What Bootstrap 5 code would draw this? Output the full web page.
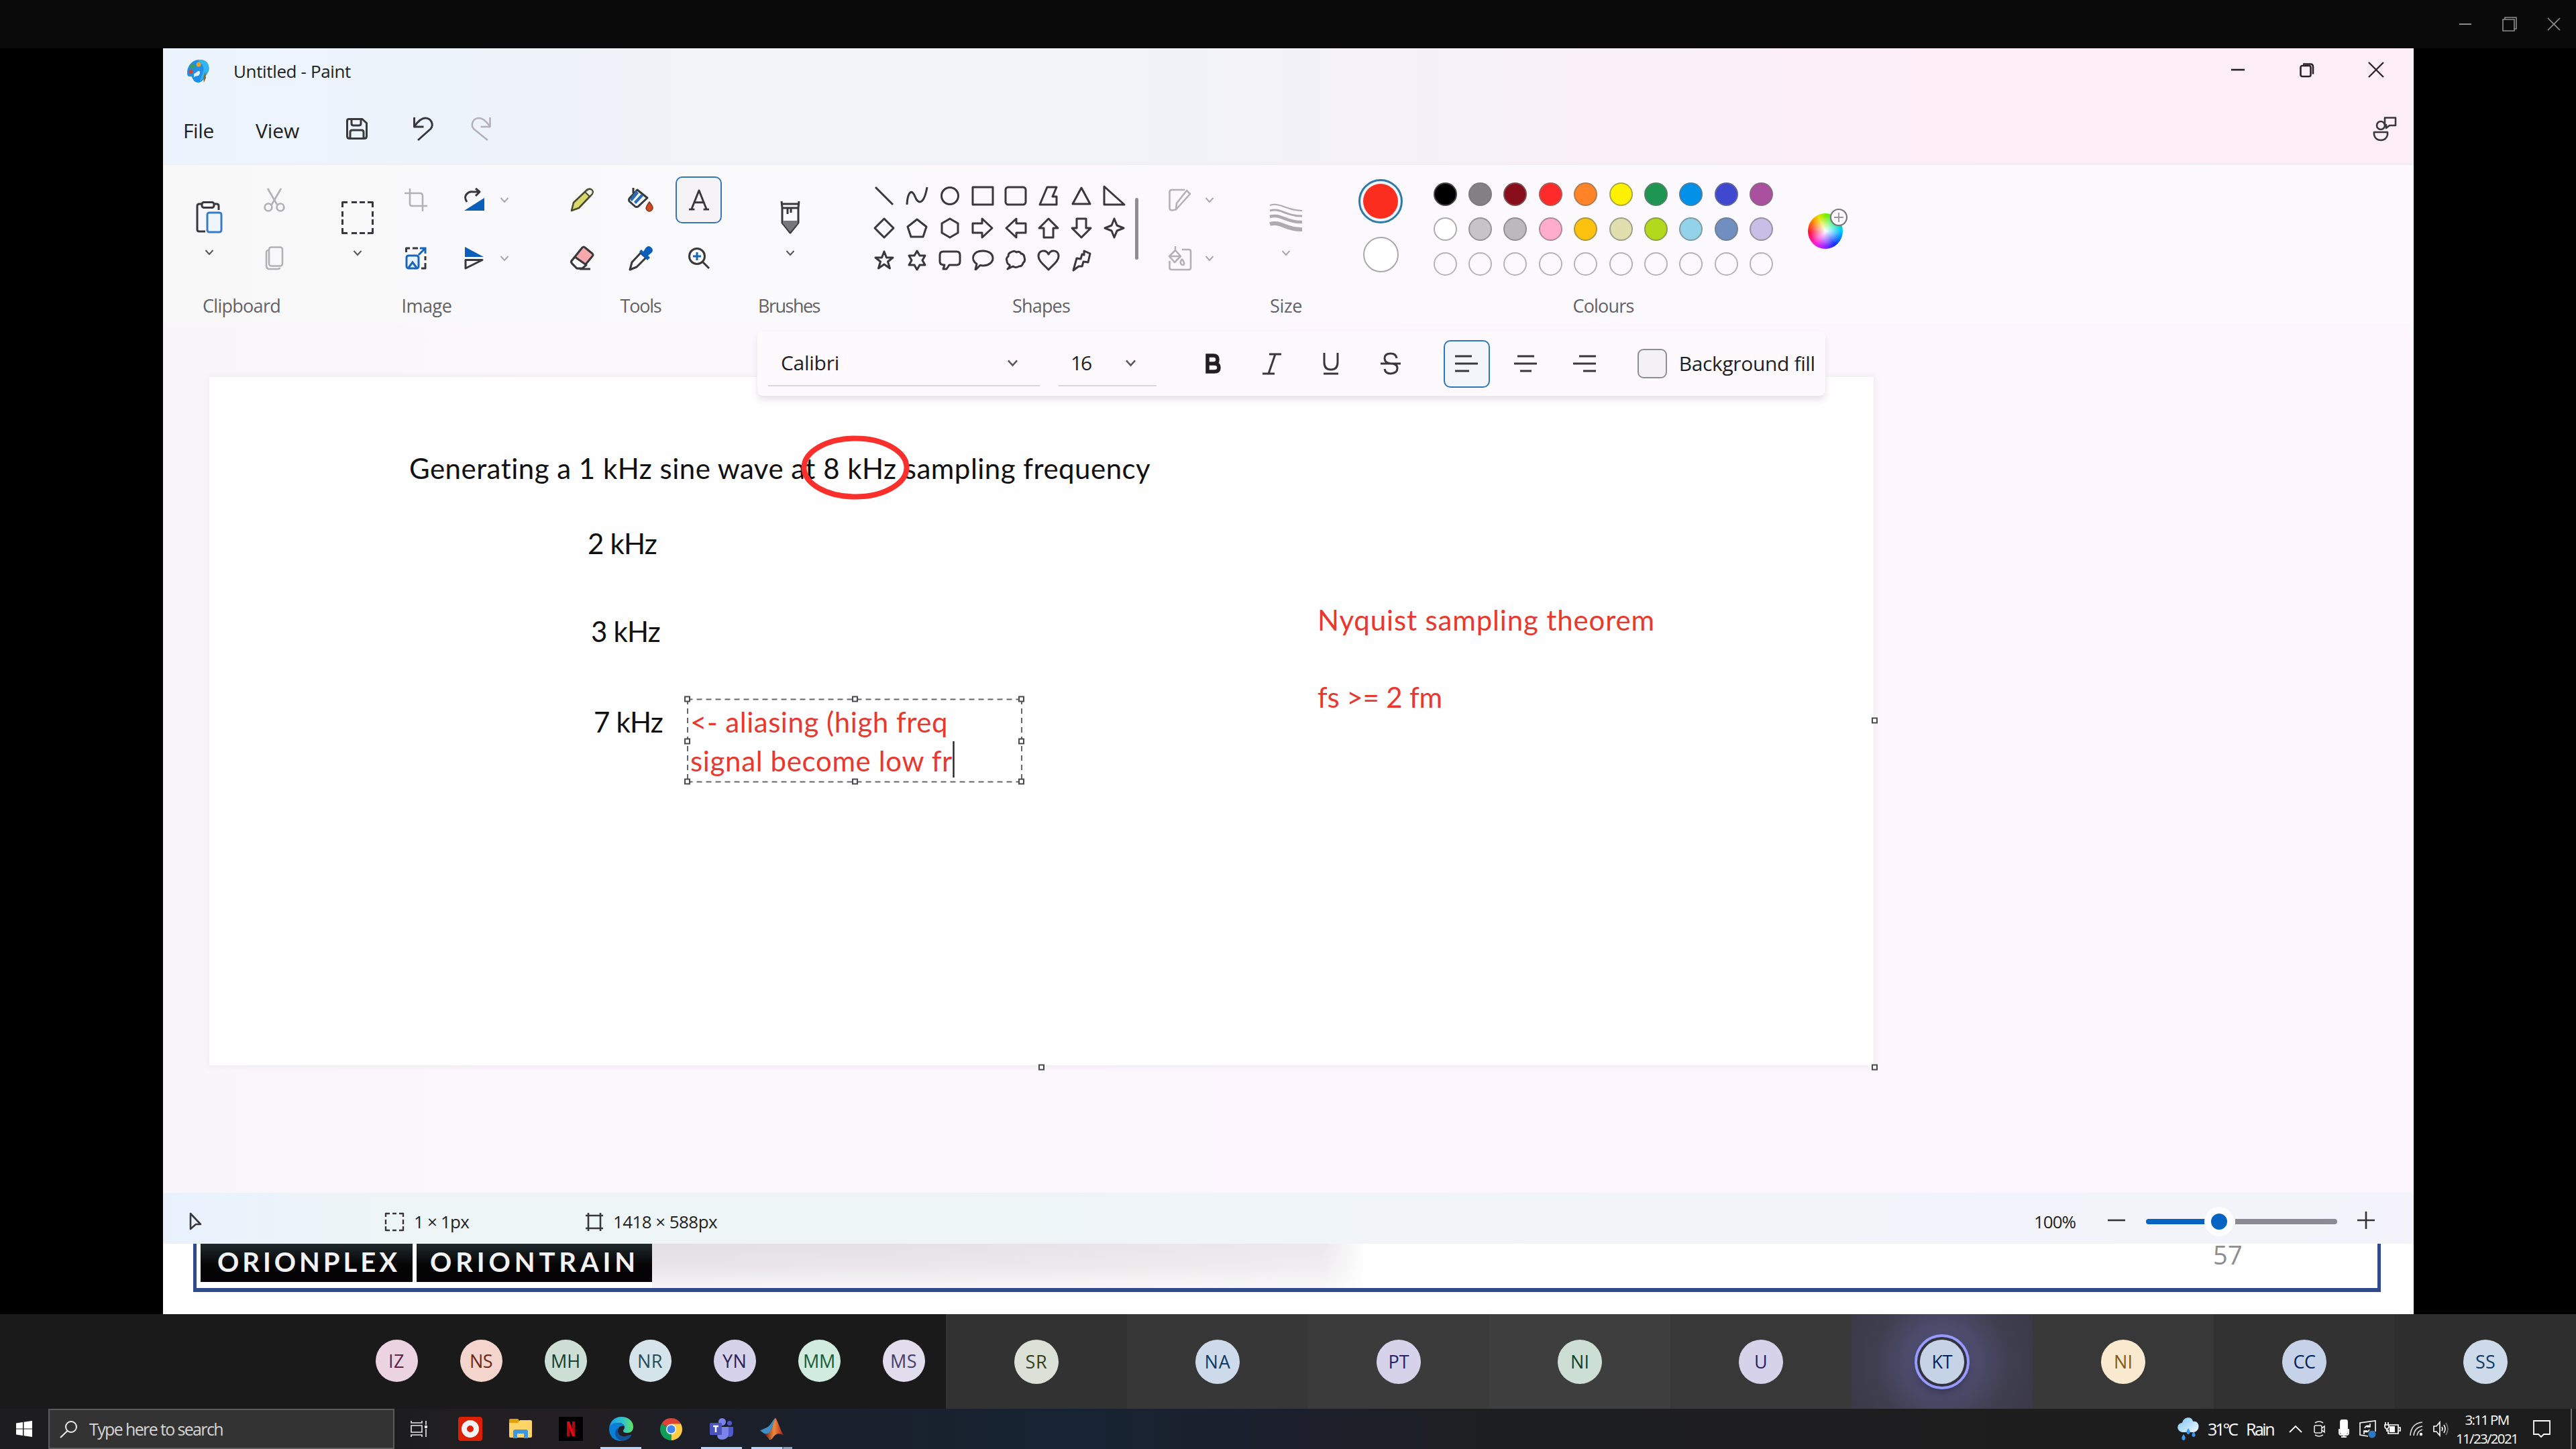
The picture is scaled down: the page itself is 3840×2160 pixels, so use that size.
<!DOCTYPE html>
<html lang="en">
<head>
<meta charset="utf-8">
<title>Untitled - Paint</title>
<link rel="stylesheet" href="https://cdn.jsdelivr.net/npm/bootstrap@5.3.0/dist/css/bootstrap.min.css">
<script src="https://cdn.jsdelivr.net/npm/bootstrap@5.3.0/dist/js/bootstrap.bundle.min.js"></script>
<style>
  html, body { width: 3840px; height: 2160px; overflow: hidden; background: #000; }
  body { font-family: "Open Sans", "Noto Sans", sans-serif; color: #1f1f23; line-height: 1; }
  svg { display: block; overflow: visible; flex: none; }
  .fit { display: inline-block; white-space: nowrap; flex: none; }
  .ln { fill: none; stroke: #38383c; stroke-width: 3; stroke-linejoin: round; }
  .dim { fill: none; stroke: #b3b1b6; stroke-width: 2.6; stroke-linejoin: round; }
  .cv { fill: none; stroke: #55555a; stroke-width: 2; }
  .cvd { fill: none; stroke: #a9a7ad; stroke-width: 2; }

  .viewer-bar { height: 72px; background: #0a0a0a; }
  .viewer-bar > span { width: 66px; }
  .stage { height: 1887px; padding: 0 242px 0 243px; background: #000; }
  .paint-app { height: 1887px; background: #fdf6fe; overflow: hidden; }
  .head { height: 172px; background: linear-gradient(90deg, #ebf4fe 0, #f0f3f8 24%, #f0f3f8 42%, #f7f0f8 60%, #fdeef8 78%, #fdeef8 100%); }
  .title-row { height: 68px; padding-right: 5px; }
  .win-cell { width: 103px; }
  .menu-row { height: 104px; font-size: 30px; }
  .menu-row .fit { margin-top: 5px; }
  .ribbon { height: 238px; background: linear-gradient(90deg, #f8f8f9 0, #faf9fb 25%, #fcf9fe 45%, #fdf9fe 100%); border-top: 2px solid #f0eff4; box-shadow: 0 1px 5px #efeaf2; position: relative; }
  .rgroup { flex: none; }
  .rgroup .tools-area { height: 184px; padding-top: 8px; }
  .rgroup .rlabel { height: 50px; font-size: 27px; color: #626266; }
  .cells { display: grid; grid-auto-flow: column; grid-template-rows: 87px 87px; place-items: center; }
  .tall { grid-row: 1 / span 2; height: 174px; padding-top: 46px; gap: 23px; }
  .a-btn { width: 69px; height: 70px; border: 2.5px solid #3576b6; border-radius: 10px; background: #f6f3f7; }
  .shape-grid { display: grid; grid-template-columns: repeat(8, 49px); grid-template-rows: repeat(3, 48px); place-items: center; margin: 14px 0 0 56px; height: 144px; }
  .shape-scroll { width: 5px; height: 92px; border-radius: 3px; background: #8d8d92; margin: 41px 0 0 7px; }
  .palette { display: grid; grid-template-columns: repeat(10, 52.4px); grid-template-rows: repeat(3, 52px); place-items: center; margin: 9px 0 0 37px; height: 156px; }
  .sw { width: 35px; height: 35px; border-radius: 50%; border: 2px solid #77777799; }
  .sw.open { border-color: #b5b3b7; }
  .col-main { width: 66px; height: 66px; border-radius: 50%; border: 3px solid #2f78aa; padding: 4px; background: #eef6fb; margin-top: 13px; }
  .col-main i { display: block; width: 52px; height: 52px; border-radius: 50%; background: #fb2d1e; }
  .col-second { width: 53px; height: 53px; border-radius: 50%; border: 2px solid #a9a8ac; background: #fff; margin: 20px auto 0; }
  .wheel { position: relative; width: 52px; height: 53px; border-radius: 50%; margin: 64px 0 0 43px;
    background: radial-gradient(circle, #fff 0, #ffffff00 62%), conic-gradient(#7cf000, #00f080 50deg, #00c8ff 90deg, #1030ff 145deg, #b020ff 190deg, #ff20d0 220deg, #ff1040 265deg, #ff8000 305deg, #e8e000 335deg, #7cf000); }
  .wheel svg { position: absolute; left: 33px; top: -7px; }

  .work { height: 1296px; background: linear-gradient(90deg, #f9f6f9 0, #fcf6fd 14%, #fdf6fe 50%, #fdf6fe 100%); position: relative; padding: 80px 0 0 69px; }
  .sheet { position: relative; width: 2481px; height: 1026px; background: #fefefe; box-shadow: 0 0 8px 2px #f0ebf1; font-family: Lato, "Liberation Sans", sans-serif; font-size: 42px; color: #111; }
  .note { position: absolute; line-height: 48px; }
  .hot { color: #e8382f; }
  .over-sheet { position: absolute; left: 0; top: 0; }
  .hd { fill: #fff; stroke: #4a4a4e; stroke-width: 2; }
  .text-tools { position: absolute; left: 886px; top: 12px; width: 1592px; height: 96px; background: #fdf9fd; border-radius: 8px; box-shadow: 0 6px 10px #e8e1ea; font-size: 30px; }
  .pick { height: 68px; border-bottom: 2px solid #dcd6dc; }
  .fmt { width: 88.2px; }
  .al-on { width: 69px; height: 71px; border: 2.5px solid #2d78bd; border-radius: 10px; background: #f2f6fb; }
  .chk { width: 44px; height: 44px; border: 2.5px solid #8e8e92; border-radius: 9px; background: #f4f1f5; }

  .status { height: 76px; background: linear-gradient(90deg, #e9f1fd 0, #eef5f7 10%, #edf5f7 35%, #f1f4f9 60%, #f4f3fb 100%); font-size: 26px; padding-top: 10px; }
  .zoomtrack { width: 285px; height: 8px; border-radius: 4px; position: relative; background: linear-gradient(90deg, #0563c1 0 88px, #f8f8fb 88px 133px, #8b8992 133px); }
  .zoomtrack i { position: absolute; left: 87px; top: -18px; width: 44px; height: 44px; border-radius: 50%; background: #0563c1; border: 10.5px solid #fdfcff; }
  .slide { height: 105px; background: #fff; padding: 0 49px 33px 45px; }
  .slide-in { height: 72px; border: solid #314a8d; border-width: 0 5px 6px 5px; background: linear-gradient(180deg, #ffffff00 0, #ffffff30 50%, #ffffffb0 100%), linear-gradient(90deg, #dedbe0 0, #e6e1e5 1100px, #ece9ec 1680px, #fff 1745px); }
  .brandbox { height: 57px; color: #f2f2f4; font: 700 40px Lato, sans-serif; line-height: 1; padding-bottom: 4px; background: linear-gradient(#1f2a2d, #060506 55%, #040204); }
  .brands { background: #fff; height: 66px; padding-left: 6px; gap: 6px; }

  .crew { height: 141px; background: #1a1a1a; font-size: 27px; }
  .crew-small { width: 1410px; padding: 38px 0 0 559.5px; gap: 63px; }
  .av { width: 63px; height: 63px; border-radius: 50%; flex: none; }
  .tile { width: 270px; height: 141px; }
  .tile .av { width: 66px; height: 66px; }
  .talk { background: radial-gradient(circle at 50% 50%, #5a5985 0, #4e4d6f 30%, #403f50 65%, #3b3946 100%); }
  .talk .av { outline: 4px solid #979bff; outline-offset: 4px; box-shadow: 0 0 0 4px #33323f, 0 8px 20px #24243a; }

  .wtask { height: 60px; background: linear-gradient(90deg, #1d1d1f 0, #1d1d20 600px, #241f22 830px, #1b1f29 1080px, #172433 1600px, #1c1f2b 1950px, #1d1e20 2250px, #1d1d1d 100%); color: #fff; font-size: 25px; }
  .start { width: 72px; }
  .find { width: 516px; height: 60px; background: #333; border: 2px solid #5b5b5b; color: #d5d5d5; padding-left: 16px; }
  .app { width: 75px; height: 60px; position: relative; }
  .app.open-app::after { content: ""; position: absolute; left: 7px; bottom: 0; width: 61px; height: 3px; background: #b3d5fb; }
  .app.more::after { background: linear-gradient(90deg, #b3d5fb 0 46px, #607486 46px 48px, #89a3bf 48px); }
  .tray { width: 36px; }
</style>
</head>
<body>
<svg width="0" height="0" class="position-absolute">
  <defs>
    <symbol id="chev" viewBox="0 0 14 10"><path d="M1.5 2l5.5 6 5.5-6"/></symbol>
    <linearGradient id="edgeA" x1="0" x2="1"><stop offset="0" stop-color="#1d9be8"/><stop offset=".6" stop-color="#35c5c8"/><stop offset="1" stop-color="#62e35c"/></linearGradient>
    <linearGradient id="mat" x1="0" x2="1"><stop offset="0" stop-color="#6b2018"/><stop offset=".5" stop-color="#f08a3c"/><stop offset="1" stop-color="#a82018"/></linearGradient>
    <linearGradient id="cloud" x1="0" x2="1" y2="1"><stop offset="0" stop-color="#79c4f5"/><stop offset="1" stop-color="#f2f8fd"/></linearGradient>
  </defs>
</svg>

<header class="viewer-bar d-flex justify-content-end align-items-center">
  <span class="d-flex justify-content-center"><svg width="18" height="2"><path d="M0 1h18" stroke="#8d8d8d" stroke-width="2"/></svg></span>
  <span class="d-flex justify-content-center"><svg width="22" height="22" fill="none" stroke="#8d8d8d" stroke-width="1.6"><path d="M1 4h17v17H1zM4 4V1h17v17h-3"/></svg></span>
  <span class="d-flex justify-content-center"><svg width="18" height="18" stroke="#8d8d8d" stroke-width="1.6"><path d="M0 0l18 18M18 0L0 18"/></svg></span>
</header>

<main class="stage">
  <div class="paint-app d-flex flex-column">
    <div class="head flex-shrink-0">
      <div class="title-row d-flex align-items-center">
        <svg style="margin-left:35px" width="36" height="36" viewBox="0 0 36 36"><path d="M19 1C8 1 1 11 1 21c0 6 4 5 6 5s2 8 9 9c6 1 9-4 11-8 5-6 8-11 6-17C31 4 26 1 19 1z" fill="#1e90e6"/><path d="M21 1c8 0 13 6 12 12-1 8-8 17-13 20 2-8 7-14 5-21-2-5-5-8-9-10z" fill="#35b4f2"/><circle cx="9" cy="11" r="3.5" fill="#3f9c5a"/><circle cx="18" cy="8" r="3.5" fill="#e5a52c"/><circle cx="6.500" cy="19" r="3" fill="#d2492f"/><path d="M28 18l-3 10 1 7 3-7z" fill="#856a2f"/><path d="M11 22c5-2 6-5 8-4s1 6-2 7-5 0-6 3z" fill="#e2eef8"/></svg>
        <span class="fit" data-w="175" style="margin-left:34px;font-size:26px">Untitled - Paint</span>
        <div class="ms-auto d-flex align-items-center pb-1">
          <span class="win-cell d-flex justify-content-center"><svg width="20" height="4"><path d="M0 2h20" stroke="#222" stroke-width="2.6"/></svg></span>
          <span class="win-cell d-flex justify-content-center"><svg width="22" height="22" fill="none" stroke="#2b2228" stroke-width="2.6"><rect x="1.500" y="5" width="15" height="16" rx="2.500"/><path d="M5 2.500h11q4 0 4 4v11"/></svg></span>
          <span class="win-cell d-flex justify-content-center"><svg width="22" height="22" stroke="#2b2228" stroke-width="2.3"><path d="M0 0l22 22M22 0L0 22"/></svg></span>
        </div>
      </div>
      <div class="menu-row d-flex align-items-center">
        <span class="fit" data-w="46" style="margin-left:30px">File</span>
        <span class="fit" data-w="65" style="margin-left:62px">View</span>
        <svg class="ln" style="margin-left:70px" width="32" height="32" viewBox="0 0 32 32"><path d="M4 1.500h20l6.500 6V27q0 3.500-3.500 3.500H5Q1.500 30.500 1.500 27V4Q1.500 1.500 4 1.500zM8 2v6q0 3 3 3h8q3 0 3-3V2M6 30V21q0-3 3-3h14q3 0 3 3v9"/></svg>
        <svg class="ln" style="margin-left:68px" width="30" height="36" viewBox="0 0 30 36"><path d="M1.500 1v14h14M2 14C7 7 12 2 18 2c9 0 13 10 8 16L7 35"/></svg>
        <svg class="dim" style="margin-left:56px" width="30" height="36" viewBox="0 0 30 36"><path d="M28.500 1v14h-14M28 14C23 7 18 2 12 2 3 2-1 12 4 18l21 17"/></svg>
        <svg class="ln" style="margin:0 25px 0 auto;stroke-width:2.6" width="36" height="36" viewBox="0 0 36 36"><circle cx="12" cy="13" r="6"/><path d="M2 23h20v4q-2 8-10 8T2 27zM18 1.500h16V13h-9l-5 4v-5h-2z"/></svg>
      </div>
    </div>

    <div class="ribbon d-flex flex-shrink-0">
      <section class="rgroup" style="width:234px">
        <div class="tools-area cells justify-content-start" style="grid-template-columns:138px 56px">
          <div class="tall d-flex flex-column align-items-center">
            <svg width="40" height="48" viewBox="0 0 40 48"><path class="ln" d="M8 4H5Q2 4 2 7v35q0 3 3 3h9M28 4h3q3 0 3 3v6"/><rect class="ln" x="9" y="1.500" width="18" height="8" rx="3"/><rect x="17" y="17" width="21" height="29" rx="3" fill="#eef5fd" stroke="#3a7cc4" stroke-width="3"/></svg>
            <svg class="cv" width="14" height="10"><use href="#chev"/></svg>
          </div>
          <svg class="dim" width="32" height="36" viewBox="0 0 32 36"><path d="M6 1l14 24M26 1L12 25"/><circle cx="7" cy="29" r="5.500"/><circle cx="25" cy="29" r="5.500"/></svg>
          <svg class="dim" width="28" height="36" viewBox="0 0 28 36"><rect x="6" y="1.500" width="20" height="28" rx="3.500"/><path d="M5 6q-3 0-3 4v19q0 5 5 5h12q3 0 3-2"/></svg>
        </div>
        <div class="rlabel d-flex align-items-center justify-content-center"><span class="fit" data-w="116">Clipboard</span></div>
      </section>

      <section class="rgroup" style="width:318px">
        <div class="tools-area cells justify-content-start" style="grid-template-columns:112px 62px 112px 10px">
          <div class="tall d-flex flex-column align-items-center">
            <svg width="48" height="49" viewBox="0 0 48 49"><path class="ln" d="M1.500 9V1.500H9M15 1.500h8M27 1.500h8M39 1.500h7.500V9M46.500 15v8M46.500 27v8M46.500 40v7.500H39M35 47.500h-8M23 47.500h-8M9 47.500H1.500V40M1.500 35v-8M1.500 23v-8"/></svg>
            <svg class="cv" width="14" height="10"><use href="#chev"/></svg>
          </div>
          <svg class="dim" width="34" height="34" viewBox="0 0 34 34"><path d="M8 0v23q0 3 3 3h23M0 7h23q4 0 4 4v23"/></svg>
          <svg width="32" height="34" viewBox="0 0 32 34"><path class="ln" d="M1.500 8V2H7M11 2h8M30 14v6M30 24v8h-6"/><rect x="2" y="13" width="18" height="19" rx="3" fill="#e8f3fd" stroke="#1766b8" stroke-width="3"/><path d="M5 31l6-8 6 8M20 12L30 2M22 2h8v8" fill="none" stroke="#1766b8" stroke-width="3"/></svg>
          <svg width="32" height="34" viewBox="0 0 32 34"><path class="ln" d="M5 20C-2 10 8 4 14 5h10M18 0l6 5-6 6"/><path d="M31 14v19H1z" fill="#0b5fb8"/></svg>
          <svg width="30" height="34" viewBox="0 0 30 34"><path d="M1 0l28 15H1z" fill="#0b5fb8"/><path class="ln" d="M2 19.500h25L2 32z"/></svg>
          <svg class="cvd" style="margin-left:-32px" width="14" height="10"><use href="#chev"/></svg>
          <svg class="cvd" style="margin-left:-32px" width="14" height="10"><use href="#chev"/></svg>
        </div>
        <div class="rlabel d-flex align-items-center justify-content-center"><span class="fit" data-w="75">Image</span></div>
      </section>

      <section class="rgroup" style="width:320px">
        <div class="tools-area cells justify-content-start" style="grid-template-columns:87px 87px 87px;padding-left:29px">
          <svg width="36" height="36" viewBox="0 0 36 36"><path d="M2 34l3-12L25 3q4-3 7 0t0 7L13 30z" fill="#d8d868" stroke="#4b4a33" stroke-width="2.600" stroke-linejoin="round"/><path d="M22 6l7 7 4-4q2-4-1-6t-6 0z" fill="#f0efe8" stroke="#4b4a33" stroke-width="2"/></svg>
          <svg width="36" height="36" viewBox="0 0 36 36"><path class="ln" d="M2 22L18 2q2-2 4 0l11 9q2 2 0 4L18 33H10L3 26q-2-2-1-4z" style="fill:#f6a9ad"/><path class="ln" style="fill:#fff" d="M2 22l5-6 17 12-6 5h-8L3 26q-2-2-1-4zM14 34h16"/></svg>
          <svg width="38" height="36" viewBox="0 0 38 36"><path class="ln" style="fill:#f4f6fb" d="M14 3l15 12-14 13q-2 1-4 0L2 20q-1-2 0-4z"/><path d="M12 4l4 4L6 20l-3-3zM20 9l3 3L12 24l-3-3z" fill="#2a6bb5"/><path class="ln" d="M8 0v8"/><path d="M32 21q6 7 5 10-2 4-5 4t-5-4q0-3 5-10z" fill="#cf4a1e" stroke="#7a3a20" stroke-width="1.500"/></svg>
          <svg width="36" height="36" viewBox="0 0 36 36"><path class="ln" style="fill:#fff" d="M18 10l8 7-14 14-10 4 3-11z"/><path d="M16 8l3-3 3 3 4-6q4-4 8 0t0 8l-5 4 3 3-4 4z" fill="#0b5fb8"/></svg>
          <div class="a-btn d-flex align-items-center justify-content-center"><svg class="ln" width="32" height="34" viewBox="0 0 34 34"><path d="M5 32L17 2l12 30M10 21h14M1 32h9M24 32h9"/></svg></div>
          <svg width="32" height="32" viewBox="0 0 32 32"><circle class="ln" cx="13" cy="13" r="11.500"/><path class="ln" d="M21 21l10 10"/><path d="M13 7v12M7 13h12" stroke="#1766b8" stroke-width="3"/></svg>
        </div>
        <div class="rlabel d-flex align-items-center justify-content-center"><span class="fit" data-w="61">Tools</span></div>
      </section>

      <section class="rgroup" style="width:122px">
        <div class="tools-area cells justify-content-center ps-1">
          <div class="tall d-flex flex-column align-items-center">
            <svg width="28" height="49" viewBox="0 0 28 49"><path class="ln" d="M1 0l1 10h24l1-10M2 4h24M2 10v22l12 15 12-15V10M10 11v8M15 11v6"/><path d="M3 29h22v4L14 46 3 33z" fill="#77777b"/></svg>
            <svg class="cv" width="14" height="10"><use href="#chev"/></svg>
          </div>
        </div>
        <div class="rlabel d-flex align-items-center justify-content-center"><span class="fit" data-w="92">Brushes</span></div>
      </section>

      <section class="rgroup" style="width:630px">
        <div class="tools-area d-flex align-items-start">
          <div class="shape-grid ln">
            <svg width="28" height="28"><path d="M1 1l26 26"/></svg>
            <svg width="32" height="28"><path d="M1 27C2 6 9 4 13 15s13 14 18-14"/></svg>
            <svg width="26" height="26"><circle cx="13" cy="13" r="12.500"/></svg>
            <svg width="32" height="28"><path d="M1 1h30v26H1z"/></svg>
            <svg width="30" height="28"><rect x="0" y="1" width="30" height="26" rx="4"/></svg>
            <svg width="28" height="28"><path d="M12 1h14l-6 14h6v12H1z"/></svg>
            <svg width="28" height="26"><path d="M14 1l13 24H1z"/></svg>
            <svg width="32" height="28"><path d="M1 0v27h30z"/></svg>
            <svg width="30" height="30"><path d="M15 1l14 14-14 14L1 15z"/></svg>
            <svg width="30" height="28"><path d="M15 1l14 11-5 15H6L1 12z"/></svg>
            <svg width="28" height="30"><path d="M14 1l12 7v14l-12 7-12-7V8z"/></svg>
            <svg width="32" height="30"><path d="M1 8h14V1l15 14-15 14v-7H1z"/></svg>
            <svg width="32" height="30"><path d="M31 8H17V1L2 15l15 14v-7h14z"/></svg>
            <svg width="30" height="30"><path d="M8 29V15H1L15 1l14 14h-7v14z"/></svg>
            <svg width="30" height="30"><path d="M8 1v14H1l14 14 14-14h-7V1z"/></svg>
            <svg width="30" height="30"><path d="M15 1l4 10 10 4-10 4-4 10-4-10-10-4 10-4z"/></svg>
            <svg width="28" height="28"><path d="M14 1l3.500 9H27l-7.500 6 3 10L14 20l-8.500 6 3-10L1 10h9.500z"/></svg>
            <svg width="28" height="28"><path d="M14 0l4 7h8l-4 7 4 7h-8l-4 7-4-7H2l4-7-4-7h8z"/></svg>
            <svg width="32" height="28"><path d="M6 1h20q5 0 5 5v10q0 5-5 5H15l-4 6H6l2-6q-7 0-7-5V6q0-5 5-5z"/></svg>
            <svg width="32" height="28"><path d="M16 0C26 0 31 5 31 11s-6 11-15 11l-4-.500-6 6-1 0 2-8C-3 13 1 0 16 0z"/></svg>
            <svg width="30" height="28"><path d="M8 2q5-3 8 0 5-2 7 2 5 1 5 6 2 5-2 8-1 5-6 5-5 3-9 0l-8 4q4-3 3-6-4-2-4-6-2-4 2-7 0-5 4-6z"/></svg>
            <svg width="32" height="30"><path d="M16 29C6 19 1 15 1 9 1 0 12-2 16 6 20-2 31 0 31 9c0 6-5 10-15 20z"/></svg>
            <svg width="28" height="30"><path d="M18 1l9 4-3 13-7-1-2 7-5 0-8 6 5-18 6 1 2-7 3 1z"/></svg>
          </div>
          <div class="shape-scroll"></div>
          <div class="cells" style="grid-template-columns:50px 38px;margin-left:37px">
            <svg class="dim" width="34" height="34" viewBox="0 0 34 34"><path d="M24 2H5Q1.500 2 1.500 5v24q0 3.500 3.500 3.500l6-1L32 8l-5-5L12 22l-1 9"/></svg>
            <svg class="dim" width="34" height="36" viewBox="0 0 34 36"><path d="M1.500 22v10q0 3 3 3H30q3 0 3-3V8q0-3-3-3H20M10 0v6l8 9-9 9-8-9 9-9M2 15h15M20 19q4 6 3 8t-4 0 1-8"/></svg>
            <svg class="cvd" width="14" height="10"><use href="#chev"/></svg>
            <svg class="cvd" width="14" height="10"><use href="#chev"/></svg>
          </div>
        </div>
        <div class="rlabel d-flex align-items-center justify-content-center"><span class="fit" data-w="86">Shapes</span></div>
      </section>

      <section class="rgroup" style="width:100px">
        <div class="tools-area cells justify-content-center">
          <div class="tall d-flex flex-column align-items-center">
            <svg width="48" height="44" viewBox="0 0 48 44" fill="none" stroke="#adabb0"><path d="M0 6c16-5 24 8 48 8" stroke-width="2"/><path d="M0 14c16-5 24 9 48 8" stroke-width="3"/><path d="M0 23c16-5 24 9 48 8" stroke-width="4.500"/><path d="M0 34c16-5 24 9 48 8" stroke-width="6"/></svg>
            <svg class="cvd" style="margin-top:5px" width="14" height="10"><use href="#chev"/></svg>
          </div>
        </div>
        <div class="rlabel d-flex align-items-center justify-content-center"><span class="fit" data-w="48">Size</span></div>
      </section>

      <section class="rgroup" style="width:846px">
        <div class="tools-area d-flex align-items-start">
          <div style="margin-left:58px"><div class="col-main"><i></i></div><div class="col-second"></div></div>
          <div class="palette" id="palette"></div>
          <div class="wheel"><svg width="26" height="26"><circle cx="13" cy="13" r="12" fill="#fbf9fb" stroke="#77777b" stroke-width="2.200"/><path d="M13 6v14M6 13h14" stroke="#97979b" stroke-width="1.800"/></svg></div>
        </div>
        <div class="rlabel d-flex align-items-center justify-content-center"><span class="fit" data-w="91">Colours</span></div>
      </section>
    </div>

    <div class="work flex-shrink-0">
      <div class="sheet">
        <span class="note fit" data-w="1106" style="left:298px;top:112px">Generating a 1 kHz sine wave at 8 kHz sampling frequency</span>
        <span class="note fit" data-w="103" style="left:564px;top:224px">2 kHz</span>
        <span class="note fit" data-w="103" style="left:569px;top:355px">3 kHz</span>
        <span class="note fit" data-w="103" style="left:573px;top:490px">7 kHz</span>
        <span class="note fit hot" data-w="384" style="left:717px;top:490px">&lt;- aliasing (high freq</span>
        <span class="note fit hot" data-w="391" style="left:717px;top:548px">signal become low fr</span>
        <span class="note fit hot" data-w="503" style="left:1652px;top:338px">Nyquist sampling theorem</span>
        <span class="note fit hot" data-w="186" style="left:1652px;top:453px">fs &gt;= 2 fm</span>
        <svg class="over-sheet" width="2490" height="1036">
          <ellipse cx="963" cy="135" rx="76.500" ry="43.500" fill="none" stroke="#fb302c" stroke-width="8"/>
          <path d="M712.500 480.500H1211M712.500 603.500H1211M713 480V603M1211 480V603" fill="none" stroke="#66666a" stroke-width="2" stroke-dasharray="8 6"/>
          <g class="hd"><path d="M709 476.500h7v7h-7zM959 476.500h7v7h-7zM1207 476.500h7v7h-7zM709 539.500h7v7h-7zM1207 539.500h7v7h-7zM709 599.500h7v7h-7zM959 599.500h7v7h-7zM1207 599.500h7v7h-7z"/>
          <path d="M2479 508.500h7v7h-7zM1237 1025.500h7v7h-7zM2479 1025.500h7v7h-7z"/></g>
          <path d="M1109.500 543v54" stroke="#222" stroke-width="2.400"/>
        </svg>
      </div>
      <div class="text-tools d-flex align-items-center">
        <div class="pick d-flex align-items-center justify-content-between" style="width:405px;margin-left:16px;padding:0 32px 0 19px"><span class="fit" data-w="87">Calibri</span><svg class="cv" style="stroke-width:2" width="17" height="12" viewBox="0 0 14 10"><use href="#chev"/></svg></div>
        <div class="pick d-flex align-items-center justify-content-between" style="width:146px;margin-left:28px;padding:0 30px 0 18px"><span class="fit" data-w="30">16</span><svg class="cv" style="stroke-width:2" width="17" height="12" viewBox="0 0 14 10"><use href="#chev"/></svg></div>
        <div class="d-flex align-items-center" style="margin-left:40px">
          <span class="fmt d-flex justify-content-center"><svg width="22" height="30"><path d="M3 3h9q6 0 6 6t-6 6H3zM3 15h10q7 0 7 6t-7 6H3z" fill="none" stroke="#202024" stroke-width="5.500"/></svg></span>
          <span class="fmt d-flex justify-content-center"><svg class="ln" width="28" height="31"><path d="M10 1h18M0 30h18M19 1L9 30"/></svg></span>
          <span class="fmt d-flex justify-content-center"><svg class="ln" width="24" height="32"><path d="M2 0v14q0 11 10 11t10-11V0M1 31h22"/></svg></span>
          <span class="fmt d-flex justify-content-center"><svg class="ln" width="30" height="32"><path d="M24 8Q23 1 15 1 6 1 6 8t9 8q10 0 10 7t-10 8q-8 0-9-7M0 16h30"/></svg></span>
        </div>
        <div class="al-on d-flex align-items-center justify-content-center" style="margin-left:35px"><svg class="ln" width="34" height="26"><path d="M0 2h25M0 13h34M0 24h21"/></svg></div>
        <svg class="ln" style="margin-left:36px" width="34" height="26"><path d="M5 2h25M0 13h34M9 24h17"/></svg>
        <svg class="ln" style="margin-left:54px" width="34" height="26"><path d="M9 2h25M0 13h34M15 24h19"/></svg>
        <span class="chk" style="margin-left:62px"></span>
        <span class="fit" data-w="203" style="margin-left:18px">Background fill</span>
      </div>
    </div>

    <div class="status d-flex align-items-center flex-shrink-0">
      <svg class="ln" style="margin-left:39px;stroke-width:2.6" width="18" height="26"><path d="M2 1l15 16H10L2 24z"/></svg>
      <svg class="ln" style="margin-left:274px;stroke-width:2.4;" width="28" height="27"><path d="M1 6V1h6M11 1h6M21 1h6v5M27 10v7M27 20v6h-6M17 26h-6M7 26H1v-6M1 17v-7"/></svg>
      <span class="fit" data-w="82" style="margin-left:15px">1 × 1px</span>
      <svg class="ln" style="margin-left:174px;stroke-width:2.6" width="26" height="27"><path d="M4 0v27M22 0v27M0 4h26M0 23h26"/></svg>
      <span class="fit" data-w="155" style="margin-left:15px">1418 × 588px</span>
      <span class="fit ms-auto" data-w="62">100%</span>
      <svg style="margin-left:48px" width="26" height="26"><path d="M0 11h26" stroke="#333" stroke-width="2.600"/></svg>
      <span class="zoomtrack" style="margin-left:31px"><i></i></span>
      <svg style="margin:0 58px 0 30px" width="26" height="26"><path d="M0 11h26M13-2v26" stroke="#333" stroke-width="2.600"/></svg>
    </div>

    <div class="slide flex-shrink-0">
      <div class="slide-in d-flex">
        <div class="brands d-flex">
          <div class="brandbox d-flex align-items-center" style="width:316px;padding-left:25px"><span class="fit" data-w="273">ORIONPLEX</span></div>
          <div class="brandbox d-flex align-items-center" style="width:351px;padding-left:20px"><span class="fit" data-w="312">ORIONTRAIN</span></div>
        </div>
        <span class="fit ms-auto" data-w="44" style="margin-right:201px;font-size:38px;color:#8f8d92;margin-top:-3px">57</span>
      </div>
    </div>
  </div>
</main>

<section class="crew d-flex">
  <div class="crew-small d-flex align-items-start flex-shrink-0" id="small"></div>
  <div class="d-flex" id="tiles"></div>
</section>

<footer class="wtask d-flex align-items-center">
  <div class="start d-flex justify-content-center"><svg width="24" height="24" fill="#fff"><path d="M0 3.500L10 2v9.500H0zM11.500 1.800L24 0v11.500H11.500zM0 12.500h10V22L0 20.500zM11.500 12.500H24V24l-12.500-1.800z"/></svg></div>
  <div class="find d-flex align-items-center"><svg width="25" height="25" fill="none" stroke="#eee" stroke-width="2"><circle cx="16" cy="9" r="8"/><path d="M10.500 15L0 25"/></svg><span class="fit" data-w="199" style="margin-left:18px">Type here to search</span></div>
  <div class="d-flex justify-content-center" style="width:75px;padding-right:3px"><svg width="25" height="24" fill="none" stroke="#e8e8e8" stroke-width="1.600"><path d="M1 0v3h16V0M1 7h16v10H1zM1 24v-3h16v3M23 0v6M23 12v12"/><path d="M23 7v4" stroke-width="4"/></svg></div>
  <div class="app d-flex align-items-center justify-content-center"><svg width="36" height="36"><rect width="36" height="36" rx="4" fill="#dd2002"/><circle cx="18" cy="18" r="9" fill="none" stroke="#f1f3f6" stroke-width="8"/></svg></div>
  <div class="app d-flex align-items-center justify-content-center"><svg width="34" height="30" viewBox="0 0 34 30"><path d="M0 2q0-2 2-2h11l3 4v4H0z" fill="#e0a008"/><path d="M0 6h13l3-4h16q2 0 2 2v22q0 2-2 2H2q-2 0-2-2z" fill="#fed367"/><path d="M6 29V19q0-3 3-3h16q3 0 3 3v10h-6v-7H12v7z" fill="#3b97de"/></svg></div>
  <div class="app d-flex align-items-center justify-content-center"><svg width="36" height="36"><rect width="36" height="36" fill="#000"/><path d="M12 7h4v22h-4zM20 7h4v22h-4z" fill="#b1060f"/><path d="M12 7h4l8 22h-4z" fill="#e50914"/></svg></div>
  <div class="app open-app d-flex align-items-center justify-content-center"><svg width="36" height="36" viewBox="0 0 36 36"><path d="M0 18C1 6 9 0 18 0c10 0 18 6 18 15 0 6-4 9-9 9-4 0-6-1-6-3s2-2 2-6c0-3-4-6-9-6-7 0-12 4-14 9z" fill="url(#edgeA)"/><path d="M0 18C1 12 6 9 12 9c5 0 9 2 11 5-5-2-10 1-10 7 0 7 6 12 14 9-3 4-7 6-11 6C6 35 0 28 0 18z" fill="#0a7fd6"/><path d="M13 20c0 7 6 10 11 9s8-3 9-2c1 2-6 9-14 9-7-1-10-8-10-12s2-6 4-7z" fill="#12529b"/></svg></div>
  <div class="app d-flex align-items-center justify-content-center"><svg width="33" height="33" viewBox="-16.500 -16.500 33 33"><path d="M0 0L-14.300-8.200A16.500 16.500 0 0 1 14.300-8.200z" fill="#db4437"/><path d="M0 0l14.300-8.200A16.500 16.500 0 0 1 0 16.500z" fill="#ffcd40"/><path d="M0 0v16.500A16.500 16.500 0 0 1-14.300-8.200z" fill="#0f9d58"/><path d="M0-8h14.300L7 4z" fill="#ffcd40"/><circle r="7.700" fill="#f1f1f1"/><circle r="6" fill="#4285f4"/></svg></div>
  <div class="app open-app d-flex align-items-center justify-content-center"><svg width="35" height="32" viewBox="0 0 35 32"><circle cx="18.500" cy="5.500" r="5.500" fill="#7b83eb"/><circle cx="29.500" cy="7.500" r="3.500" fill="#5059c9"/><path d="M24 13h11v9q0 6-6 6-5 0-5-5z" fill="#5059c9"/><path d="M11 13h17v10q0 8-8.500 9T11 24z" fill="#7b83eb"/><rect y="7" width="18" height="18" rx="1.500" fill="#4b53bc"/><path d="M5 12h8M9 12v9" stroke="#fff" stroke-width="2.500"/></svg></div>
  <div class="app open-app more d-flex align-items-center justify-content-center"><svg width="35" height="36" viewBox="0 0 35 33"><path d="M0 19l11-5C16 11 19 3 23 0c-3 9-5 18-11 25-4-1-4-1-5-1z" fill="#3f8fc4"/><path d="M23 0c4 6 7 18 12 26-7-4-11-2-14 1-2 3-4 6-7 6-2-4-5-6-7-9 12 0 11-14 16-24z" fill="url(#mat)"/></svg></div>

  <div class="ms-auto d-flex align-items-center h-100">
    <svg width="32" height="35" viewBox="0 0 32 35"><path d="M7 22c-9-2-9-13 0-14C9-2 22-2 23 6c10-2 12 13 2 16z" fill="url(#cloud)"/><path d="M16 16q4 5 2 8-2 2-4 0-2-3 2-8zM9 25q4 5 2 8-2 2-4 0-2-3 2-8zM24 21q4 5 2 7-2 2-4 0-2-2 2-7z" fill="#3b9af0"/></svg>
    <span class="fit" data-w="43" style="margin-left:13px">31°C</span>
    <span class="fit" data-w="41" style="margin-left:14px">Rain</span>
    <span class="d-flex justify-content-center" style="width:36px;margin-left:15px"><svg width="18" height="10" fill="none" stroke="#fff" stroke-width="1.800"><path d="M0 10l9-9 9 9"/></svg></span>
    <span class="tray d-flex justify-content-center"><svg width="18" height="24" fill="none" stroke="#e8e8e8" stroke-width="1.600"><path d="M2 3q6-4 12 0M2 21q6 4 12 0M1 9q0-2 2-2h7q2 0 2 2v7q0 2-2 2H3q-2 0-2-2zM12 11l4-3v9l-4-3"/></svg></span>
    <span class="tray d-flex justify-content-center"><svg width="16" height="26" fill="none" stroke="#fff" stroke-width="1.800"><rect x="3" y="0" width="10" height="20" rx="2" fill="#fff"/><path d="M1 13v6q0 3 3 3h8q3 0 3-3v-6M8 22v3M4 25h8"/></svg></span>
    <span class="tray d-flex justify-content-center"><svg width="26" height="26" fill="none" stroke="#fff" stroke-width="1.600"><path d="M13 24L1 22V4l23-3v16M8 12q2-5 8-3M16 5v5h-5M15 14q-2 5-7 3M7 21v-5h5"/><circle cx="19" cy="21" r="5.500" fill="#2f77c0" stroke="none"/></svg></span>
    <span class="tray d-flex justify-content-center"><svg width="24" height="20" fill="none" stroke="#fff" stroke-width="1.700"><path d="M8 4h13v13H6V11M22 8h2v5h-2M2 0v4M6 0v4M1 4h6v3q-1 3-3 3t-3-3zM4 10v4"/><path d="M8 6h8v9H8z" fill="#fff" stroke="none"/></svg></span>
    <span class="tray d-flex justify-content-center"><svg width="20" height="22" fill="none" stroke="#ddd" stroke-width="1.600"><path d="M1 21Q2 3 19 1M6 21Q7 9 19 7M11 21q1-7 8-9"/><circle cx="17" cy="19" r="2.200" fill="#fff" stroke="none"/></svg></span>
    <span class="tray d-flex justify-content-center"><svg width="23" height="22" fill="none" stroke="#fff" stroke-width="1.600"><path d="M1 7h4l5-6v20l-5-6H1zM13 8q2 3 0 6M16 5q4 6 0 12"/><path d="M19 2q6 9 0 18" stroke="#777"/></svg></span>
    <div class="d-flex flex-column align-items-center" style="width:102px;gap:8px;font-size:20.5px;line-height:20px"><span class="fit" data-w="65">3:11 PM</span><span class="fit" data-w="92">11/23/2021</span></div>
    <svg style="margin:0 30px 0 18px" width="26" height="26" fill="none" stroke="#fff" stroke-width="1.800"><path d="M1 1h24v20h-9l-4 4-4-4H1z"/></svg>
    <span style="width:2px;height:60px;background:#6f6f6f;margin-right:6px"></span>
  </div>
</footer>

<script>
  // Colour palette, first row to last; blanks are free slots.
  const colours = ["#000000","#848086","#880e1b","#ff2b2b","#ff8327","#fff200","#1e9550","#0090e8","#4048cf","#a9509e",
    "#ffffff","#c7c3c9","#bcb9be","#ffadca","#fdc20e","#e2dfae","#b2d91b","#93d3ea","#6f8fc0","#c7bfe6"];
  const palette = document.getElementById("palette");
  for (let i = 0; i < 30; i++) {
    const s = document.createElement("span");
    s.className = "sw" + (colours[i] ? "" : " open");
    if (colours[i]) s.style.background = colours[i];
    palette.append(s);
  }
  // Meeting participants: initials, circle colour, text colour, text width, tile colour.
  const avatar = p => `<span class="av d-flex align-items-center justify-content-center" style="background:${p[1]};color:${p[2]}"><span class="fit" data-w="${p[3]}">${p[0]}</span></span>`;
  document.getElementById("small").innerHTML = [
    ["IZ","#ebd3e1","#5c1f45",24],["NS","#f3d5cd","#6f2414",34],["MH","#cddfd5","#133f2b",44],["NR","#d5e3ea","#244b5a",38],
    ["YN","#d6d2e9","#2b2054",36],["MM","#d1ecde","#165b37",48],["MS","#e1dded","#463c66",40]].map(avatar).join("");
  document.getElementById("tiles").innerHTML = [
    ["SR","#dce1d7","#33401f",33,"#323232"],["NA","#ccdaea","#103a66",39,"#373737"],["PT","#d6d2e9","#2b2060",31,"#3b3b3b"],
    ["NI","#cddfd5","#133f2b",28,"#3e3e3e"],["U","#d6d2e9","#2b2060",20,"#383838"],["KT","#c6d2e6","#03245a",31,""],
    ["NI","#f8e9cf","#835b14",28,"#383838"],["CC","#c6d2e8","#03245a",33,"#323232"],["SS","#ccdaea","#103a66",30,"#2e2e2e"]
  ].map(p => `<div class="tile d-flex align-items-center justify-content-center ${p[4] ? "" : "talk"}" style="background-color:${p[4] || "#3f3d4d"}">${avatar(p)}</div>`).join("");
  // Track each label to its set width.
  document.querySelectorAll(".fit").forEach(el => {
    const gap = (+el.dataset.w - el.getBoundingClientRect().width) / el.textContent.length;
    el.style.letterSpacing = gap.toFixed(3) + "px";
  });
</script>
</body>
</html>
